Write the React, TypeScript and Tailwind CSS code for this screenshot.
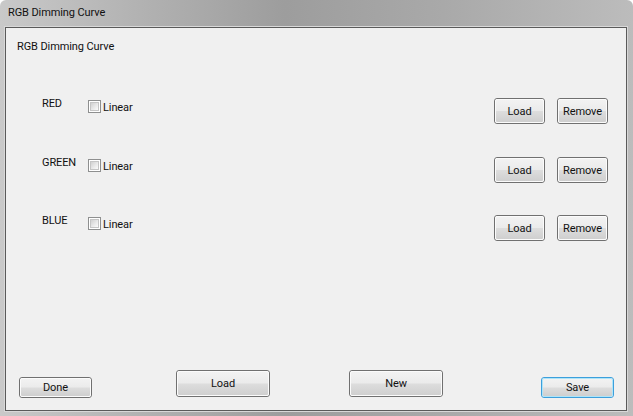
import React from 'react'

const font = { fontFamily: 'Roboto, "Noto Sans", sans-serif' }

function WinButton({
  label,
  className = '',
  focused = false,
}: {
  label: string
  className?: string
  focused?: boolean
}) {
  return (
    <button
      type="button"
      className={`shrink-0 rounded-[3px] border p-0 ${
        focused ? 'border-[#3c9fdc]' : 'border-[#707070]'
      } ${className}`}
    >
      <div
        className={`flex h-full w-full items-center justify-center rounded-[2px] border text-[11px] leading-none tracking-[-0.1px] text-[#111] ${
          focused ? 'border-[#aee4f8]' : 'border-[#fbfbfb]'
        } bg-[linear-gradient(to_bottom,#f2f2f2_0%,#ebebeb_48%,#dddddd_52%,#cfcfcf_100%)]`}
      >
        {label}
      </div>
    </button>
  )
}

function Checkbox() {
  return (
    <div className="h-[13px] w-[13px] shrink-0 border border-[#8e8f8f] bg-white p-[1px]">
      <div className="h-full w-full border border-[#c5c5c5] bg-[linear-gradient(135deg,#d0d0d0_0%,#e9e9e9_55%,#fbfbfb_100%)]" />
    </div>
  )
}

function ColorRow({ name, className = '' }: { name: string; className?: string }) {
  return (
    <div className={`flex h-[29px] items-start pl-[36px] pr-[18px] ${className}`}>
      <span className="w-[46px] text-[11px] leading-[15px] tracking-[-0.1px] text-[#111]">{name}</span>
      <div className="mt-[4px] flex items-start">
        <Checkbox />
        <span className="ml-[2px] text-[11px] leading-[15px] tracking-[-0.1px] text-[#111]">Linear</span>
      </div>
      <div className="ml-auto mt-[2px] flex gap-[12px]">
        <WinButton label="Load" className="h-[26px] w-[51px]" />
        <WinButton label="Remove" className="h-[26px] w-[51px]" />
      </div>
    </div>
  )
}

export default function App() {
  return (
    <div
      style={font}
      className="flex h-[416px] w-[633px] flex-col overflow-hidden rounded-t-[6px] bg-[linear-gradient(to_right,#c9c9c9_0%,#b4b4b4_20%,#9d9d9d_45%,#a9a9a9_70%,#bcbcbc_100%)] pb-[5px] pl-[5px] pr-[6px]"
    >
      <div className="flex h-[27px] shrink-0 items-center pl-[3px] text-[11px] tracking-[-0.1px] text-[#111]">
        RGB Dimming Curve
      </div>
      <div className="flex flex-1 flex-col border border-[#5a5a5a] bg-[#f0f0f0] shadow-[0_0_0_1px_#d8d8d8]">
        <div className="pl-[11px] pt-[11px] text-[11px] leading-[15px] tracking-[-0.1px] text-[#111]">
          RGB Dimming Curve
        </div>
        <ColorRow name="RED" className="mt-[42px]" />
        <ColorRow name="GREEN" className="mt-[30px]" />
        <ColorRow name="BLUE" className="mt-[29px]" />
        <div className="mt-auto flex items-start pb-[12px] pl-[13px]">
          <WinButton label="Done" className="mt-[7px] h-[21px] w-[73px]" />
          <WinButton label="Load" className="ml-[84px] h-[27px] w-[94px]" />
          <WinButton label="New" className="ml-[79px] h-[27px] w-[94px]" />
          <WinButton label="Save" focused className="ml-[98px] mt-[7px] h-[21px] w-[73px]" />
        </div>
      </div>
    </div>
  )
}
